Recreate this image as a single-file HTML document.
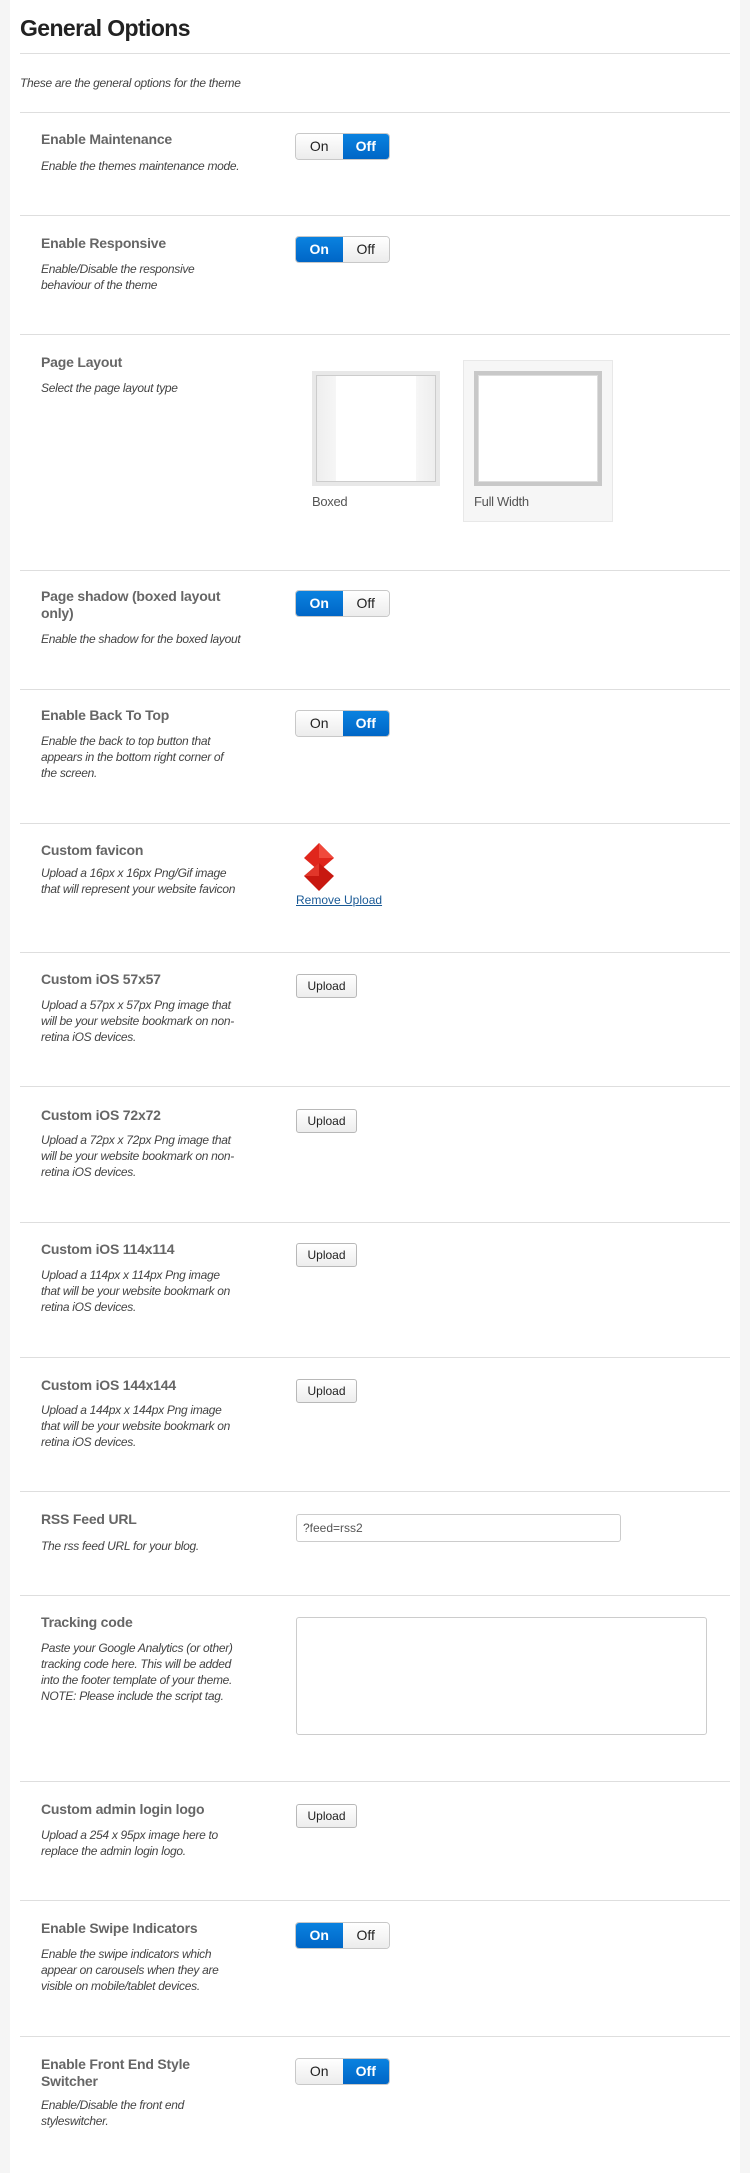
<!DOCTYPE html>
<html><head><meta charset="utf-8"><style>
*{margin:0;padding:0;box-sizing:border-box}
body{width:750px;height:2173px;background:#f5f5f5;font-family:"Liberation Sans",Arial,sans-serif;position:relative;overflow:hidden}
.panel{position:absolute;left:10px;top:0;width:730px;height:2173px;background:#fff}
.a{position:absolute}
h1{position:absolute;left:20px;top:15px;font-size:23px;font-weight:bold;color:#222;letter-spacing:-0.6px}
.hr{position:absolute;left:20px;width:710px;height:1px;background:#dedede}
.lbl{position:absolute;left:41px;font-size:14px;font-weight:bold;color:#666;line-height:17px;width:250px;letter-spacing:-0.2px}
.desc{position:absolute;left:41px;font-size:12px;font-style:italic;color:#444;line-height:16px;width:260px;letter-spacing:-0.3px}
.tg{position:absolute;left:295px;width:95px;height:27px;border-radius:4px;display:flex;overflow:hidden;border:1px solid #c8c8c8;font-size:14px}
.tg span{flex:1;text-align:center;line-height:25px;color:#222;background:linear-gradient(#fff,#ececec)}
.tg span.on{background:linear-gradient(#0a82e0,#0066c6);color:#fff;font-weight:bold}
.btn{position:absolute;left:296px;width:61px;height:24px;border:1px solid #b8b8b8;border-radius:3px;background:linear-gradient(#fff,#ededed);font-size:12px;text-align:center;line-height:22px;color:#222}
</style></head><body>
<div class="panel"></div>
<h1>General Options</h1>
<div class="hr" style="top:53px"></div>
<div class="desc" style="left:20px;top:75px;width:500px">These are the general options for the theme</div>
<div class="hr" style="top:112px"></div>

<div class="lbl" style="top:131px">Enable Maintenance</div>
<div class="desc" style="top:158px">Enable the themes maintenance mode.</div>
<div class="tg" style="top:133px"><span>On</span><span class="on">Off</span></div>
<div class="hr" style="top:215px"></div>

<div class="lbl" style="top:235px">Enable Responsive</div>
<div class="desc" style="top:261px">Enable/Disable the responsive<br>behaviour of the theme</div>
<div class="tg" style="top:236px"><span class="on">On</span><span>Off</span></div>
<div class="hr" style="top:334px"></div>

<div class="lbl" style="top:354px">Page Layout</div>
<div class="desc" style="top:380px">Select the page layout type</div>
<div class="a" style="left:463px;top:360px;width:150px;height:162px;background:#f6f6f6;border:1px solid #e8e8e8"></div>
<div class="a" style="left:312px;top:371px;width:128px;height:115px;background:#e8e8e8;padding:4px">
 <div style="width:100%;height:100%;background:#fff;border:1px solid #ccc;position:relative">
  <div style="position:absolute;left:0;top:0;width:19px;height:100%;background:linear-gradient(90deg,#eee,#f6f6f6)"></div>
  <div style="position:absolute;right:0;top:0;width:19px;height:100%;background:linear-gradient(90deg,#f6f6f6,#eee)"></div>
 </div></div>
<div class="a" style="left:474px;top:371px;width:128px;height:115px;background:#c8c8c8;padding:4px">
 <div style="width:100%;height:100%;background:#fff;border:1px solid #ddd"></div></div>
<div class="a" style="left:312px;top:494px;font-size:13px;color:#555;letter-spacing:-0.3px">Boxed</div>
<div class="a" style="left:474px;top:494px;font-size:13px;color:#555;letter-spacing:-0.3px">Full Width</div>
<div class="hr" style="top:570px"></div>

<div class="lbl" style="top:588px">Page shadow (boxed layout<br>only)</div>
<div class="desc" style="top:631px">Enable the shadow for the boxed layout</div>
<div class="tg" style="top:590px"><span class="on">On</span><span>Off</span></div>
<div class="hr" style="top:689px"></div>

<div class="lbl" style="top:707px">Enable Back To Top</div>
<div class="desc" style="top:733px">Enable the back to top button that<br>appears in the bottom right corner of<br>the screen.</div>
<div class="tg" style="top:710px"><span>On</span><span class="on">Off</span></div>
<div class="hr" style="top:823px"></div>

<div class="lbl" style="top:842px">Custom favicon</div>
<div class="desc" style="top:865px">Upload a 16px x 16px Png/Gif image<br>that will represent your website favicon</div>
<svg class="a" style="left:302px;top:843px" width="34" height="48" viewBox="0 0 34 48">
<polygon points="17,0 32,15 17,28 2,15" fill="#e0261c"/><polygon points="17,0 32,15 17,15" fill="#f04a3c"/>
<polygon points="17,20 32,33 17,48 2,33" fill="#c81810"/><polygon points="2,33 17,20 17,33" fill="#e2362a"/>
</svg>
<div class="a" style="left:296px;top:893px;font-size:12px;color:#1a5a96;text-decoration:underline">Remove Upload</div>
<div class="hr" style="top:952px"></div>

<div class="lbl" style="top:971px">Custom iOS 57x57</div>
<div class="desc" style="top:997px">Upload a 57px x 57px Png image that<br>will be your website bookmark on non-<br>retina iOS devices.</div>
<div class="btn" style="top:974px">Upload</div>
<div class="hr" style="top:1086px"></div>

<div class="lbl" style="top:1107px">Custom iOS 72x72</div>
<div class="desc" style="top:1132px">Upload a 72px x 72px Png image that<br>will be your website bookmark on non-<br>retina iOS devices.</div>
<div class="btn" style="top:1109px">Upload</div>
<div class="hr" style="top:1222px"></div>

<div class="lbl" style="top:1241px">Custom iOS 114x114</div>
<div class="desc" style="top:1267px">Upload a 114px x 114px Png image<br>that will be your website bookmark on<br>retina iOS devices.</div>
<div class="btn" style="top:1243px">Upload</div>
<div class="hr" style="top:1357px"></div>

<div class="lbl" style="top:1377px">Custom iOS 144x144</div>
<div class="desc" style="top:1402px">Upload a 144px x 144px Png image<br>that will be your website bookmark on<br>retina iOS devices.</div>
<div class="btn" style="top:1379px">Upload</div>
<div class="hr" style="top:1491px"></div>

<div class="lbl" style="top:1511px">RSS Feed URL</div>
<div class="desc" style="top:1538px">The rss feed URL for your blog.</div>
<div class="a" style="left:296px;top:1514px;width:325px;height:28px;border:1px solid #ccc;border-radius:3px;font-size:12px;color:#555;padding:6px 6px">?feed=rss2</div>
<div class="hr" style="top:1595px"></div>

<div class="lbl" style="top:1614px">Tracking code</div>
<div class="desc" style="top:1640px">Paste your Google Analytics (or other)<br>tracking code here. This will be added<br>into the footer template of your theme.<br>NOTE: Please include the script tag.</div>
<div class="a" style="left:296px;top:1617px;width:411px;height:118px;border:1px solid #ccc;border-radius:3px"></div>
<div class="hr" style="top:1781px"></div>

<div class="lbl" style="top:1801px">Custom admin login logo</div>
<div class="desc" style="top:1827px">Upload a 254 x 95px image here to<br>replace the admin login logo.</div>
<div class="btn" style="top:1804px">Upload</div>
<div class="hr" style="top:1900px"></div>

<div class="lbl" style="top:1920px">Enable Swipe Indicators</div>
<div class="desc" style="top:1946px">Enable the swipe indicators which<br>appear on carousels when they are<br>visible on mobile/tablet devices.</div>
<div class="tg" style="top:1922px"><span class="on">On</span><span>Off</span></div>
<div class="hr" style="top:2036px"></div>

<div class="lbl" style="top:2056px">Enable Front End Style<br>Switcher</div>
<div class="desc" style="top:2097px">Enable/Disable the front end<br>styleswitcher.</div>
<div class="tg" style="top:2058px"><span>On</span><span class="on">Off</span></div>
</body></html>
